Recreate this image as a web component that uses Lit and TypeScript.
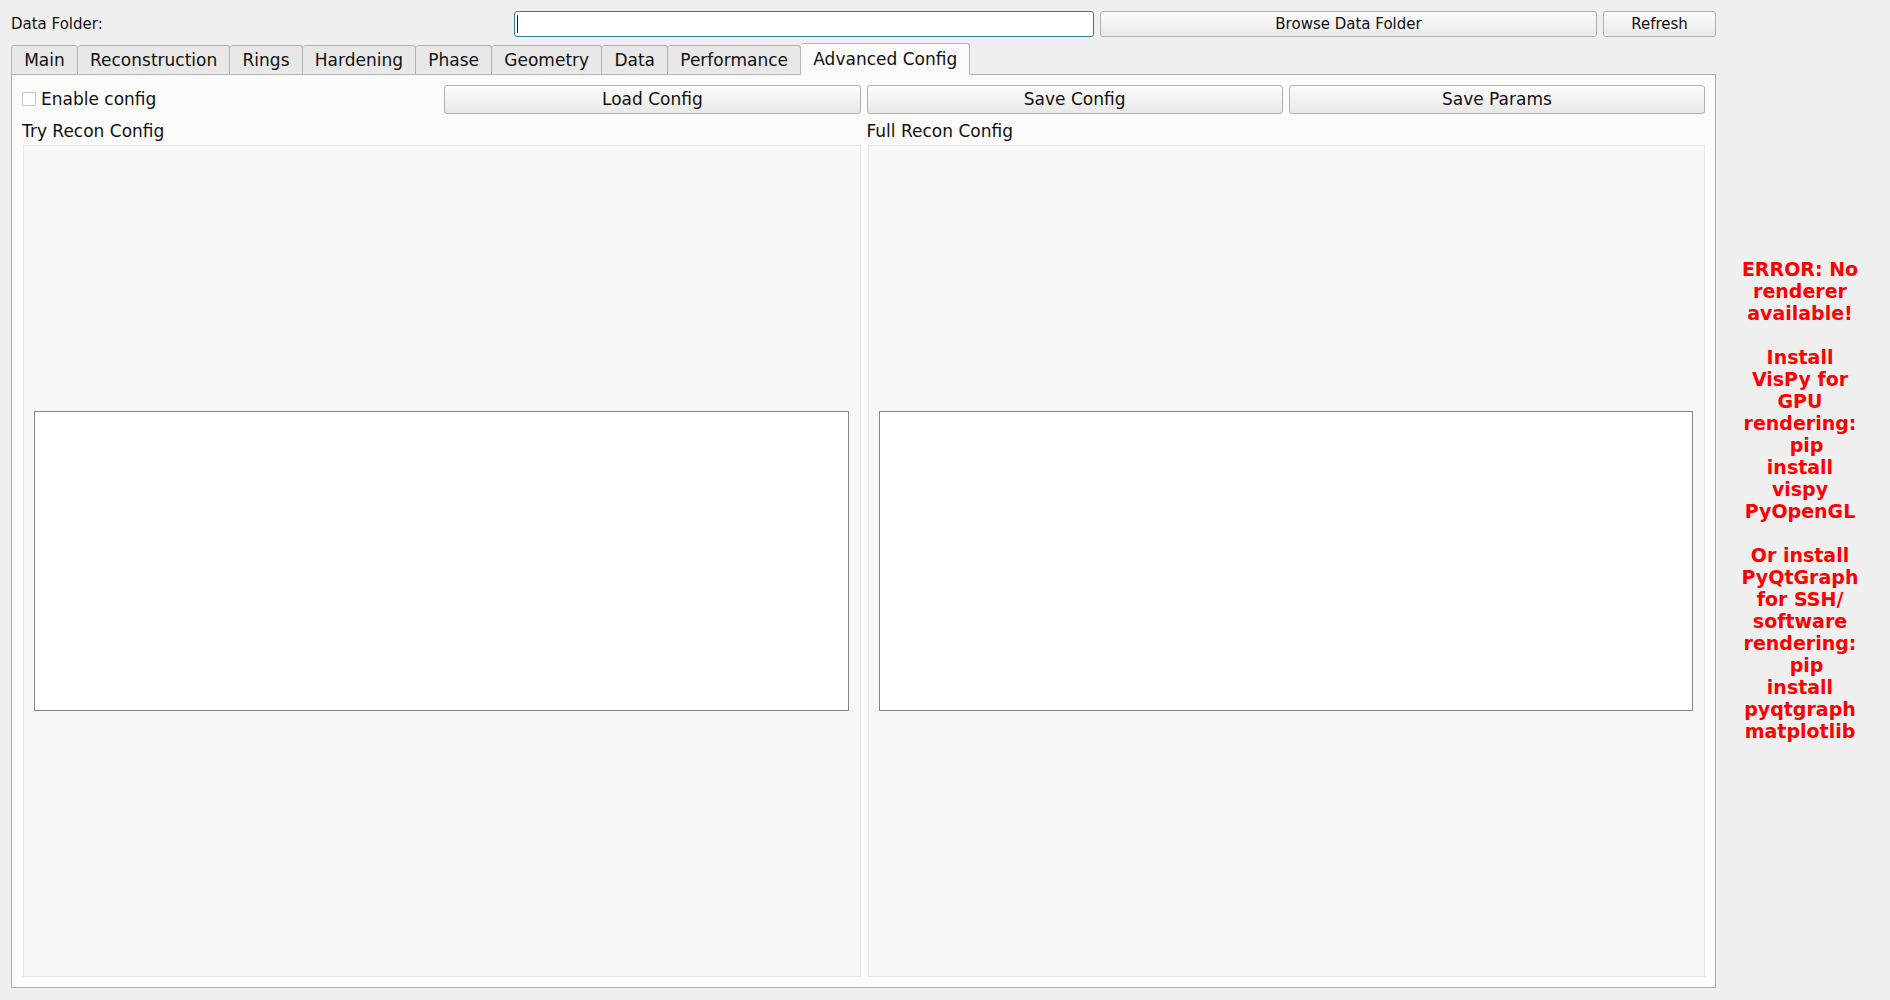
import { LitElement, html, css } from 'lit';
import { customElement, state } from 'lit/decorators.js';

const TABS = ['Main', 'Reconstruction', 'Rings', 'Hardening', 'Phase', 'Geometry', 'Data', 'Performance', 'Advanced Config'];

const ERROR_TEXT = `ERROR: No
renderer
available!

Install
VisPy for
GPU
rendering:
  pip
install
vispy
PyOpenGL

Or install
PyQtGraph
for SSH/
software
rendering:
  pip
install
pyqtgraph
matplotlib`;

@customElement('app-root')
class AppRoot extends LitElement {
  @state() active = 8;

  static styles = css`
    :host {
      display: flex;
      width: 1890px;
      height: 1000px;
      box-sizing: border-box;
      padding: 11px 0 12px 11px;
      background: #efefef;
      color: #111;
      font-family: 'DejaVu Sans', sans-serif;
      font-size: 17px;
      overflow: hidden;
    }
    .main {
      width: 1705px;
      flex: none;
      display: flex;
      flex-direction: column;
    }
    .top {
      display: flex;
      gap: 6px;
      height: 26px;
      align-items: stretch;
    }
    .folder-label {
      width: 497px;
      font-size: 15px;
      line-height: 26px;
      flex: none;
    }
    .path {
      width: 580px;
      flex: none;
      box-sizing: border-box;
      border: 1px solid #2f79a8;
      border-radius: 3px;
      background: #fff;
      padding: 3px 2px;
    }
    .caret {
      display: block;
      width: 1px;
      height: 18px;
      background: #222;
    }
    .btn {
      box-sizing: border-box;
      border: 1px solid #b0b0b0;
      border-radius: 3px;
      background: linear-gradient(#fbfbfb, #e9e9e9);
      color: #111;
      font: inherit;
      padding: 0;
    }
    .top .btn {
      font-size: 15px;
    }
    .browse {
      width: 497px;
    }
    .refresh {
      width: 113px;
    }
    .tabs {
      display: flex;
      height: 30px;
      margin-top: 8px;
      align-items: flex-end;
      position: relative;
      z-index: 1;
    }
    .tab {
      box-sizing: border-box;
      height: 30px;
      padding: 0 12.15px;
      border: 1px solid #b4b4b4;
      border-left-width: 0;
      border-radius: 3px 3px 0 0;
      background: #e8e8e8;
      line-height: 29px;
      white-space: nowrap;
    }
    .tab:first-child {
      border-left-width: 1px;
    }
    .tab.on {
      height: 32px;
      background: #fbfbfb;
      border-bottom-color: #fbfbfb;
      line-height: 30px;
    }
    .pane {
      flex: 1;
      min-height: 0;
      margin-top: -1px;
      box-sizing: border-box;
      border: 1px solid #adadad;
      background: #fbfbfb;
      padding: 10px 10px 10px 10px;
      display: flex;
      flex-direction: column;
    }
    .actions {
      display: grid;
      grid-template-columns: repeat(4, 1fr);
      gap: 6px;
      height: 29px;
    }
    .actions .btn {
      padding-bottom: 1px;
    }
    .check {
      display: flex;
      align-items: center;
      gap: 5px;
      padding-bottom: 2px;
    }
    .box {
      width: 14px;
      height: 14px;
      box-sizing: border-box;
      border: 1px solid #c4c4c4;
      border-radius: 1px;
      background: #fdfdfd;
    }
    .columns {
      flex: 1;
      min-height: 0;
      margin-top: 5px;
      display: grid;
      grid-template-columns: 1fr 1fr;
      gap: 6px;
    }
    .col {
      display: flex;
      flex-direction: column;
      min-height: 0;
    }
    .col-title {
      height: 26px;
      line-height: 24px;
    }
    .editor {
      flex: 1;
      margin-left: 1px;
      box-sizing: border-box;
      border: 1px solid #e6e6e6;
      background: #f8f8f8;
      padding: 0 11px 0 10px;
      display: flex;
      align-items: center;
    }
    .canvas {
      flex: 1;
      height: 300px;
      box-sizing: border-box;
      border: 1px solid #858585;
      background: #fff;
    }
    .error {
      flex: 1;
      display: flex;
      align-items: center;
      justify-content: center;
      padding-right: 6px;
      color: #ff0000;
      font-size: 19px;
      font-weight: 700;
      line-height: 22px;
      text-align: center;
      white-space: pre;
    }
  `;

  render() {
    return html`
      <div class="main">
        <div class="top">
          <div class="folder-label">Data Folder:</div>
          <div class="path"><span class="caret"></span></div>
          <button class="btn browse">Browse Data Folder</button>
          <button class="btn refresh">Refresh</button>
        </div>
        <div class="tabs">
          ${TABS.map((t, i) => html`<div class="tab ${i === this.active ? 'on' : ''}">${t}</div>`)}
        </div>
        <div class="pane">
          <div class="actions">
            <label class="check"><span class="box"></span>Enable config</label>
            <button class="btn">Load Config</button>
            <button class="btn">Save Config</button>
            <button class="btn">Save Params</button>
          </div>
          <div class="columns">
            <div class="col">
              <div class="col-title">Try Recon Config</div>
              <div class="editor"><div class="canvas"></div></div>
            </div>
            <div class="col">
              <div class="col-title">Full Recon Config</div>
              <div class="editor"><div class="canvas"></div></div>
            </div>
          </div>
        </div>
      </div>
      <div class="error">${ERROR_TEXT}</div>
    `;
  }
}
